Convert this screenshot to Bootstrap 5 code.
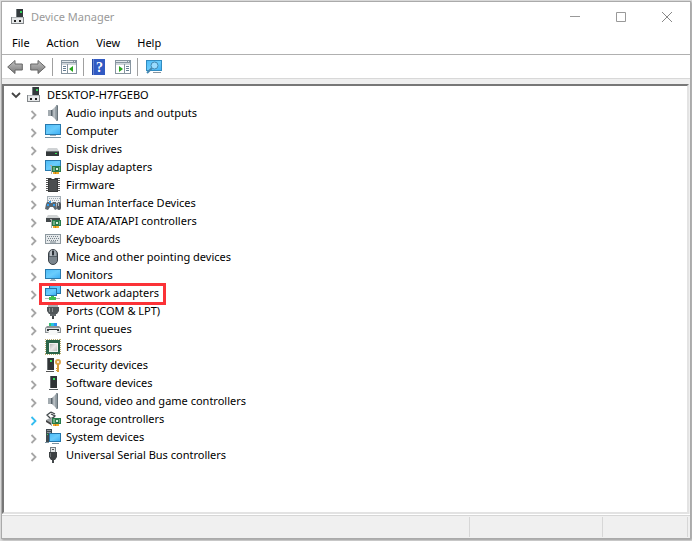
<!DOCTYPE html>
<html lang="en">
<head>
<meta charset="utf-8">
<meta name="viewport" content="width=device-width, initial-scale=1">
<title>Device Manager</title>
<link href="https://cdn.jsdelivr.net/npm/bootstrap@5.3.0/dist/css/bootstrap.min.css" rel="stylesheet">
<script src="https://cdn.jsdelivr.net/npm/bootstrap@5.3.0/dist/js/bootstrap.bundle.min.js" defer></script>
<style>
body{background:#dedede;padding:1px 1px 2px;font-family:"Noto Sans","Open Sans",sans-serif;font-size:11px;line-height:18px;color:#000}
svg{display:block;flex:none}
button{background:none;border:0;padding:0;color:inherit;font:inherit}
.win{border:1px solid #aaa;box-shadow:1px 1px 2px #999;background:#fff}
.titlebar{height:29px;padding-left:9px;color:#999}
.titlebar h1{font-size:11px;line-height:18px}
.caption{width:46px;height:28px;display:flex;align-items:center;justify-content:center}
.menus{height:24px;padding-left:10px;gap:17px;border-bottom:1px solid #b0b0b0}
.tools{height:24px;padding-left:5px;border-bottom:1px solid #d8d8d8}
.tools button{width:16px}
.tools button + button{margin-left:7px}
.rule{width:1px;height:18px;background:#a0a0a0;margin:0 8px 0 6px}
.band{background:#efefef;padding-top:5px}
.pane{background:#fff;border:2px solid;border-color:#777 #e3e3e3 #e3e3e3 #777;margin-right:1px;padding-left:4px}
.item{height:18px}
.twist{width:15px;height:18px;display:flex;align-items:center;justify-content:center;color:#a6a6a6}
.kids{padding-left:18px}
.kids .twist{padding:3px 0 0 1px}
.kids .item svg.ic{margin-left:4px;margin-right:5px}
.hot{color:#35bdf0}
.marked{position:relative}
.marked::after{content:"";position:absolute;left:13px;top:-1px;width:127px;height:22px;border:3px solid #fb3237;pointer-events:none}
.status{height:23px;background:#f0f0f0;border-top:1px solid #d7d7d7;margin-top:1px;padding:1px 2px 1px 0}
.cell{border-right:1px solid #d7d7d7}
.mid{width:133px}.end{width:85px}
</style>
</head>
<body class="min-vh-100 d-flex flex-column">
<svg width="0" height="0" class="position-absolute" aria-hidden="true">
<defs>
<linearGradient id="blue" x1="0" y1="0" x2="1" y2="1"><stop offset="0" stop-color="#4fbdf8"/><stop offset=".5" stop-color="#6accfc"/><stop offset="1" stop-color="#3fb0f5"/></linearGradient>
<linearGradient id="metal"><stop offset="0" stop-color="#6b757c"/><stop offset=".5" stop-color="#c6ccd0"/><stop offset="1" stop-color="#8a949b"/></linearGradient>
<linearGradient id="grey" x1="0" y1="0" x2="0" y2="1"><stop offset="0" stop-color="#c4c4c4"/><stop offset="1" stop-color="#777"/></linearGradient>
<linearGradient id="silver" x1="0" y1="0" x2="1" y2="1"><stop offset="0" stop-color="#bbb"/><stop offset=".5" stop-color="#e8e8e8"/><stop offset="1" stop-color="#c0c0c0"/></linearGradient>
<symbol id="right" viewBox="0 0 8 10"><path d="M1.5 1 5.5 5l-4 4" fill="none" stroke="currentColor" stroke-width="1.8"/></symbol>
<symbol id="pc" viewBox="0 0 16 16"><path d="M5 0h7v9H5z" fill="#33393c"/><path d="M5 0h1v9H5z" fill="#737a7e"/><path d="M9 2h2v2H9z" fill="#34d35a"/><path d="M0 8h13v7H0z" fill="#83878a"/><path d="M1 8h11v1H1z" fill="#b3b7ba"/><path d="M1 9h11v5H1z" fill="#e7e9ea"/><path d="M3 11h2v2H3zm5 0h2v2H8z" fill="#222"/></symbol>
<symbol id="audio" viewBox="0 0 16 16"><path d="M3 5h4v6H3z" fill="#a3abb0"/><path d="M6 5h1v6H6z" fill="#59646c"/><path d="m7 5 4-4v14l-4-4z" fill="url(#metal)"/><path d="M11 0h2v16h-2z" fill="#909aa0"/><path d="M12 1h1v14h-1z" fill="#68737a"/></symbol>
<symbol id="computer" viewBox="0 0 16 16"><path d="M0 1h16v11H0z" fill="#2879ad"/><path d="M1 2h14v9H1z" fill="url(#blue)"/><path d="M5 12h6v1H5z" fill="#9fb0bc"/><path d="M0 14h16v1H0z" fill="#7892a2"/></symbol>
<symbol id="monitor" viewBox="0 0 16 16"><path d="M0 2h16v10H0z" fill="#2879ad"/><path d="M1 3h14v8H1z" fill="url(#blue)"/><path d="M6 12h4v1H6zm-1 1h6v1H5z" fill="#9aaab5"/></symbol>
<symbol id="disk" viewBox="0 0 16 16"><path d="M3 7h9l2 3H1z" fill="#cfd2d4"/><path d="M1 10h13v5H1z" fill="#34393b"/><path d="M1 10h13v1H1z" fill="#6f7477"/><path d="M10 12h2v1h-2z" fill="#33e755"/></symbol>
<symbol id="card" viewBox="0 0 16 16"><path d="M5 6h2v9H6V7H5z" fill="#a9adab"/><path d="M7 7h9v6H7z" fill="#277a4a"/><path d="M8 8h2v4H8zm6 0h1v4h-1z" fill="#6fae84"/><path d="M11 9h2v2h-2z" fill="#d4efdc"/><path d="M8 13h6v2H8z" fill="#f0a92a"/><path d="M10 13h1v2h-1z" fill="#c77d17"/></symbol>
<symbol id="display" viewBox="0 0 16 16"><path d="M0 1h16v11H0z" fill="#2879ad"/><path d="M1 2h14v9H1z" fill="url(#blue)"/><use href="#card" width="16" height="16"/></symbol>
<symbol id="firmware" viewBox="0 0 16 16"><path d="M3 1h3l1 1h2l1-1h3v14H3z" fill="#393b3c"/><path d="M4 3h8v11H4z" fill="#4a4d4f"/><path d="M2 1v14M14 1v14" stroke="#555" stroke-width="2" stroke-dasharray="1 1"/></symbol>
<symbol id="hid" viewBox="0 0 16 16"><path d="M2 1h14v8H2z" fill="#a5afb7"/><path d="M3 2h12v6H3z" fill="#eef1f3"/><path d="M4 3.5h11M3 5.5h11" stroke="#a0aab2" stroke-dasharray="1 1"/><path d="M2 7h3l1 1h1l1-1h3l1 7-2 1-2-3H5l-2 3-3-1 1-5z" fill="#5d6870"/><path d="M4 6h2v2H4z" fill="#2f9cf0"/><path d="M2 9h2v2H2zm6 0h2v2H8z" fill="#2f9cf0"/><rect x="12" y="7" width="4" height="8" rx="2" fill="#50575d"/><path d="M13 8h1v3h-1z" fill="#b9c1c7"/></symbol>
<symbol id="ide" viewBox="0 0 16 16"><path d="M3 2h9l3 3H1z" fill="#d0d3d4"/><path d="M1 5h14v4H1z" fill="#44494c"/><use href="#card" width="16" height="16"/></symbol>
<symbol id="keyboard" viewBox="0 0 16 16"><path d="M0 3h16v10H0z" fill="#8d989f"/><path d="M1 4h14v8H1z" fill="#e5e9eb"/><path d="M2 5.5h12M3 7.5h11M2 9.5h12" stroke="#77828a" stroke-dasharray="1 1"/><path d="M5 11h6" stroke="#77828a"/></symbol>
<symbol id="mouse" viewBox="0 0 16 16"><rect x="3.5" y=".5" width="9" height="15" rx="4.5" fill="#7b858d" stroke="#3b4147"/><path d="M5 3q1-2 2-2v6H5z" fill="#b7bdc3"/><path d="M9 1q2 0 2 2v4H9z" fill="#9da5ac"/><path d="M7 2h2v4H7z" fill="#2c3238"/><path d="M4 7.5h8" stroke="#555e66"/></symbol>
<symbol id="network" viewBox="0 0 16 16"><path d="M4 0h12v9H4z" fill="#2475a9"/><path d="M5 1h10v7H5z" fill="url(#blue)"/><path d="M0 3h12v8H0z" fill="#2475a9"/><path d="M1 4h10v6H1z" fill="url(#blue)"/><path d="M0 13.5h15" stroke="#b3b9b5"/><path d="M6 11h3v1h2v3H4v-3h2z" fill="#3fc04f"/></symbol>
<symbol id="port" viewBox="0 0 16 16"><path d="M3 0h10v4H3z" fill="#a9adaf"/><path d="M4 1.5h8" stroke="#555" stroke-dasharray="1 1"/><path d="M2 4h12v4l-2 3H4L2 8z" fill="#505659"/><path d="M4 5h1v4H4zm3 0h1v4H7z" fill="#8a9092"/><path d="M5 11h6v2H5z" fill="#606669"/><path d="M7 13h2v3H7z" fill="#404548"/></symbol>
<symbol id="printer" viewBox="0 0 16 16"><path d="M4 2h3v4H4z" fill="#38c172"/><path d="M7 2h5v4H7z" fill="#2c8ff0"/><path d="M6 2h3v3H6z" fill="#27c4dc"/><path d="M2 5h12l2 2v5H0V7z" fill="#8d9396"/><path d="M1 7h14v4H1z" fill="#dfe2e3"/><path d="M2 8h12v2H2z" fill="#303538"/><path d="M4 9h8l1 5H3z" fill="#f7f8f8"/></symbol>
<symbol id="cpu" viewBox="0 0 16 16"><path d="M.5 0v16M15.5 0v16M0 .5h16M0 15.5h16" stroke="#b6ac70" stroke-dasharray="1 1"/><path d="M1 1h14v14H1z" fill="#2b654a"/><path d="M4 4h9v9H4z" fill="#f2f2f2"/><path d="M5 5h7v7H5z" fill="url(#silver)"/></symbol>
<symbol id="security" viewBox="0 0 16 16"><path d="M2 1h7v12H2z" fill="#303436"/><path d="M2 1h1v12H2z" fill="#6b7073"/><path d="M5 3h2v2H5z" fill="#34e259"/><path d="M1 14h8v1H1z" fill="#555"/><circle cx="13" cy="5" r="2" fill="none" stroke="#dca548" stroke-width="2"/><path d="M12 7h2v8h-2v-1h-1v-1h1v-1h-1v-1h1z" fill="#d89f39"/></symbol>
<symbol id="software" viewBox="0 0 16 16"><path d="M5 1h7v12H5z" fill="#303436"/><path d="M5 1h1v12H5z" fill="#646a6d"/><path d="M8 3h2v2H8z" fill="#34e259"/><path d="M4 14h9v1H4z" fill="#555b5e"/></symbol>
<symbol id="storage" viewBox="0 0 16 16"><path d="M6 1 2 4l4 4 4-3M6 1l4 2M6 3l4 2-2 2" fill="none" stroke="#42484b" stroke-width="1.3"/><path d="m1 9 4-2 5 3v3H5z" fill="#9ca2a4"/><path d="m1 9 5 3v2l-5-3z" fill="#444"/><use href="#card" width="16" height="16"/></symbol>
<symbol id="system" viewBox="0 0 16 16"><path d="M1 0h6v13H1z" fill="#404a50"/><path d="M2 1.5h4M2 3.5h4" stroke="#8b969c"/><path d="M2 5h1v1H2z" fill="#35df5b"/><path d="M4 4h12v9H4z" fill="#2475a9"/><path d="M5 5h10v7H5z" fill="url(#blue)"/><path d="M0 13h4v1H0zm7 1h7v1H7z" fill="#7b929f"/></symbol>
<symbol id="usb" viewBox="0 0 16 16"><path d="M5 0h6v5H5z" fill="#777e82"/><path d="M6 1h4v4H6z" fill="#e2e5e6"/><path d="M7 2h2v1H7z" fill="#555"/><path d="M4 5h8v5l-2 3H6l-2-3z" fill="#3c4043"/><path d="M5 6h1v4H5z" fill="#6c7275"/><path d="M7 13h2v3H7z" fill="#44494c"/></symbol>
<symbol id="pane" viewBox="0 0 16 14"><path d="M0 0h16v14H0z" fill="#8795a0"/><path d="M1 3h14v10H1z" fill="#fff"/><path d="M1 1h11v1H1zm12 0h1v1h-1z" fill="#e0e6ea"/><path d="M1 4h14" stroke="#9caab5"/></symbol>
</defs>
</svg>
<main class="win flex-grow-1 d-flex flex-column">
<header class="titlebar d-flex align-items-center">
<svg width="16" height="16"><use href="#pc"/></svg><h1 class="m-0 ms-1 fw-normal">Device Manager</h1>
<div class="ms-auto d-flex">
<button class="caption" aria-label="Minimize"><svg width="10" height="10" stroke="#999"><path d="M0 4.5h10"/></svg></button>
<button class="caption" aria-label="Maximize"><svg width="10" height="10" stroke="#999" fill="none"><path d="M.5.5h9v9h-9z"/></svg></button>
<button class="caption" aria-label="Close"><svg width="10" height="10" stroke="#888"><path d="m0 0 10 10M10 0 0 10"/></svg></button>
</div>
</header>
<nav class="menus d-flex align-items-center" aria-label="Menu"><button>File</button><button>Action</button><button>View</button><button>Help</button></nav>
<div class="tools d-flex align-items-center" role="toolbar" aria-label="Tools">
<button aria-label="Back"><svg width="16" height="16"><path d="M.7 8 8 1.5V5h7.3v6H8v3.5z" fill="url(#grey)" stroke="#666"/></svg></button>
<button aria-label="Forward"><svg width="16" height="16"><path d="M15.3 8 8 1.5V5H.7v6H8v3.5z" fill="url(#grey)" stroke="#666"/></svg></button>
<span class="rule"></span>
<button aria-label="Show console tree"><svg width="16" height="14"><use href="#pane"/><path d="M2 6.5h3M2 8.5h3M2 10.5h3" stroke="#667f94"/><path d="M6.5 4v9" stroke="#8795a0"/><path d="M12 6v6L8 9z" fill="#27a51d"/></svg></button>
<span class="rule"></span>
<button aria-label="Help topics"><svg width="14" height="16" viewBox="0 0 14 16"><path d="M0 0h13v16H0z" fill="#2147a5"/><path d="M1 0h1v16H1z" fill="#6a87d1"/><path d="M2 0h11v16H2z" fill="#315ac3"/><text x="4" y="13" font-family="Liberation Serif,serif" font-size="14" font-weight="bold" fill="#fff">?</text></svg></button>
<button aria-label="Show action pane"><svg width="16" height="14"><use href="#pane"/><path d="M11 6.5h3M11 8.5h3M11 10.5h3" stroke="#667f94"/><path d="M9.5 4v9" stroke="#8795a0"/><path d="M4 6v6l4-3z" fill="#27a51d"/></svg></button>
<span class="rule"></span>
<button aria-label="Scan for hardware changes"><svg width="16" height="16"><path d="M0 1h16v11H0z" fill="#318cc1"/><path d="M1 2h14v9H1z" fill="url(#blue)"/><path d="M7 13.5h8" stroke="#8795a0"/><path d="m6 9-5 5" stroke="#4387b0" stroke-width="2"/><circle cx="8.5" cy="6.5" r="3.5" fill="#9adcff" stroke="#4488b1"/></svg></button>
</div>
<div class="band flex-grow-1 d-flex flex-column">
<section class="pane flex-grow-1" aria-label="Devices">
<div class="item d-flex align-items-center"><button class="twist" aria-label="Collapse"><svg width="10" height="8"><path d="m1 2 4 4 4-4" fill="none" stroke="#444" stroke-width="1.8"/></svg></button><svg class="ms-1 me-1" width="16" height="16"><use href="#pc"/></svg><span>DESKTOP-H7FGEBO</span></div>
<ul class="kids list-unstyled mb-0">
<li class="item d-flex align-items-center"><button class="twist" aria-label="Expand"><svg width="8" height="10"><use href="#right"/></svg></button><svg class="ic" width="16" height="16"><use href="#audio"/></svg><span>Audio inputs and outputs</span></li>
<li class="item d-flex align-items-center"><button class="twist" aria-label="Expand"><svg width="8" height="10"><use href="#right"/></svg></button><svg class="ic" width="16" height="16"><use href="#computer"/></svg><span>Computer</span></li>
<li class="item d-flex align-items-center"><button class="twist" aria-label="Expand"><svg width="8" height="10"><use href="#right"/></svg></button><svg class="ic" width="16" height="16"><use href="#disk"/></svg><span>Disk drives</span></li>
<li class="item d-flex align-items-center"><button class="twist" aria-label="Expand"><svg width="8" height="10"><use href="#right"/></svg></button><svg class="ic" width="16" height="16"><use href="#display"/></svg><span>Display adapters</span></li>
<li class="item d-flex align-items-center"><button class="twist" aria-label="Expand"><svg width="8" height="10"><use href="#right"/></svg></button><svg class="ic" width="16" height="16"><use href="#firmware"/></svg><span>Firmware</span></li>
<li class="item d-flex align-items-center"><button class="twist" aria-label="Expand"><svg width="8" height="10"><use href="#right"/></svg></button><svg class="ic" width="16" height="16"><use href="#hid"/></svg><span>Human Interface Devices</span></li>
<li class="item d-flex align-items-center"><button class="twist" aria-label="Expand"><svg width="8" height="10"><use href="#right"/></svg></button><svg class="ic" width="16" height="16"><use href="#ide"/></svg><span>IDE ATA/ATAPI controllers</span></li>
<li class="item d-flex align-items-center"><button class="twist" aria-label="Expand"><svg width="8" height="10"><use href="#right"/></svg></button><svg class="ic" width="16" height="16"><use href="#keyboard"/></svg><span>Keyboards</span></li>
<li class="item d-flex align-items-center"><button class="twist" aria-label="Expand"><svg width="8" height="10"><use href="#right"/></svg></button><svg class="ic" width="16" height="16"><use href="#mouse"/></svg><span>Mice and other pointing devices</span></li>
<li class="item d-flex align-items-center"><button class="twist" aria-label="Expand"><svg width="8" height="10"><use href="#right"/></svg></button><svg class="ic" width="16" height="16"><use href="#monitor"/></svg><span>Monitors</span></li>
<li class="item d-flex align-items-center marked"><button class="twist" aria-label="Expand"><svg width="8" height="10"><use href="#right"/></svg></button><svg class="ic" width="16" height="16"><use href="#network"/></svg><span>Network adapters</span></li>
<li class="item d-flex align-items-center"><button class="twist" aria-label="Expand"><svg width="8" height="10"><use href="#right"/></svg></button><svg class="ic" width="16" height="16"><use href="#port"/></svg><span>Ports (COM &amp; LPT)</span></li>
<li class="item d-flex align-items-center"><button class="twist" aria-label="Expand"><svg width="8" height="10"><use href="#right"/></svg></button><svg class="ic" width="16" height="16"><use href="#printer"/></svg><span>Print queues</span></li>
<li class="item d-flex align-items-center"><button class="twist" aria-label="Expand"><svg width="8" height="10"><use href="#right"/></svg></button><svg class="ic" width="16" height="16"><use href="#cpu"/></svg><span>Processors</span></li>
<li class="item d-flex align-items-center"><button class="twist" aria-label="Expand"><svg width="8" height="10"><use href="#right"/></svg></button><svg class="ic" width="16" height="16"><use href="#security"/></svg><span>Security devices</span></li>
<li class="item d-flex align-items-center"><button class="twist" aria-label="Expand"><svg width="8" height="10"><use href="#right"/></svg></button><svg class="ic" width="16" height="16"><use href="#software"/></svg><span>Software devices</span></li>
<li class="item d-flex align-items-center"><button class="twist" aria-label="Expand"><svg width="8" height="10"><use href="#right"/></svg></button><svg class="ic" width="16" height="16"><use href="#audio"/></svg><span>Sound, video and game controllers</span></li>
<li class="item d-flex align-items-center"><button class="twist hot" aria-label="Expand"><svg width="8" height="10"><use href="#right"/></svg></button><svg class="ic" width="16" height="16"><use href="#storage"/></svg><span>Storage controllers</span></li>
<li class="item d-flex align-items-center"><button class="twist" aria-label="Expand"><svg width="8" height="10"><use href="#right"/></svg></button><svg class="ic" width="16" height="16"><use href="#system"/></svg><span>System devices</span></li>
<li class="item d-flex align-items-center"><button class="twist" aria-label="Expand"><svg width="8" height="10"><use href="#right"/></svg></button><svg class="ic" width="16" height="16"><use href="#usb"/></svg><span>Universal Serial Bus controllers</span></li>
</ul>
</section>
</div>
<footer class="status d-flex"><div class="cell flex-grow-1"></div><div class="cell mid"></div><div class="cell end"></div></footer>
</main>
</body>
</html>
